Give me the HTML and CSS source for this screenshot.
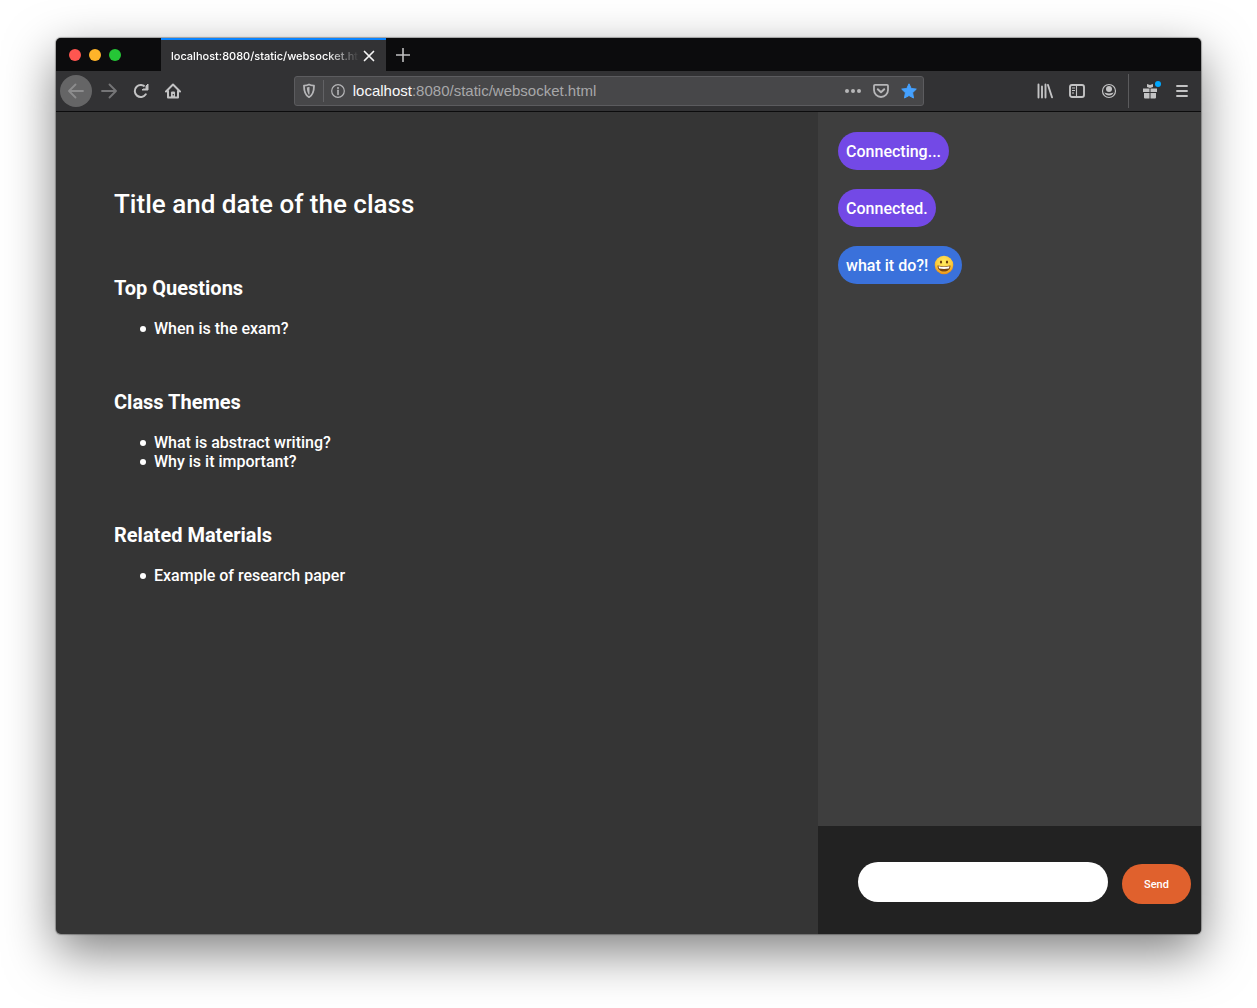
FILE: index.html
```html
<!DOCTYPE html>
<html lang="en">
<head>
<meta charset="utf-8">
<title>Class chat</title>
<link rel="stylesheet" href="styles.css">
</head>
<body>
<div class="window">
  <header class="tabbar">
    <div class="lights">
      <button class="light light-red" aria-label="Close window"></button>
      <button class="light light-yellow" aria-label="Minimize window"></button>
      <button class="light light-green" aria-label="Zoom window"></button>
    </div>
    <div class="tab">
      <span class="tab-title">localhost:8080/static/websocket.html</span>
      <button class="tab-button" aria-label="Close tab"><svg width="12" height="12" viewBox="0 0 12 12"><path d="M1.500 1.500l9 9M10.500 1.500l-9 9" fill="none" stroke="#f4f4f4" stroke-width="1.700" stroke-linecap="round"/></svg></button>
    </div>
    <button class="tab-new" aria-label="New tab"><svg width="14" height="14" viewBox="0 0 14 14"><path d="M7 .5v13M.5 7h13" fill="none" stroke="#c0c0c1" stroke-width="1.600" stroke-linecap="round"/></svg></button>
  </header>

  <nav class="toolbar">
    <button class="tool tool-back" aria-label="Back"><svg width="16" height="16" viewBox="0 0 16 16"><path d="M15 8H1.500M7.500 1.500L1 8l6.500 6.500" fill="none" stroke="#8c8c8d" stroke-width="1.800" stroke-linecap="round" stroke-linejoin="round"/></svg></button>
    <button class="tool" aria-label="Forward"><svg width="16" height="16" viewBox="0 0 16 16"><path d="M1 8h13.500M8.500 1.500L15 8l-6.500 6.500" fill="none" stroke="#757577" stroke-width="1.800" stroke-linecap="round" stroke-linejoin="round"/></svg></button>
    <button class="tool" aria-label="Reload"><svg width="16" height="16" viewBox="0 0 16 16"><path d="M12.800 11.300A6 6 0 1 1 12.500 4.300" fill="none" stroke="#c3c3c4" stroke-width="2" stroke-linecap="round"/><path d="M15 1v6H9z" fill="#c3c3c4" stroke="#c3c3c4" stroke-width="1" stroke-linejoin="round"/><path d="M9.500 5.500l3-3v3z" fill="#323234"/></svg></button>
    <button class="tool" aria-label="Home"><svg width="16" height="16" viewBox="0 0 16 16"><path d="M1 8.500L8 1.500l7 7M3 7.500V14.500h10V7.500" fill="none" stroke="#c3c3c4" stroke-width="2" stroke-linecap="round" stroke-linejoin="round"/><path d="M6 14.500V9.500q0-1 1-1h2q1 0 1 1v5z" fill="#c3c3c4"/><circle cx="8.300" cy="11.700" r=".8" fill="#323234"/></svg></button>
    <div class="spacer"></div>
    <div class="urlbar">
      <button class="url-icon" aria-label="Tracking protection"><svg width="14" height="16" viewBox="0 0 14 16"><path d="M7 1.500c1.800.8 3.500 1 5 1.200 0 5.500-.8 9.200-5 11.500C2.800 11.900 2 8.200 2 2.700c1.500-.2 3.200-.4 5-1.200z" fill="none" stroke="#b6b6b8" stroke-width="1.800" stroke-linejoin="round"/><path d="M7 4v7.500C5.500 10 5 8 4.800 4.600z" fill="#b6b6b8"/><path d="M7 4v7.500" stroke="#b6b6b8" stroke-width="1"/></svg></button>
      <span class="url-divider"></span>
      <button class="url-icon" aria-label="Site information"><svg width="14" height="14" viewBox="0 0 14 14"><circle cx="7" cy="7" r="6.300" fill="none" stroke="#b6b6b8" stroke-width="1.200"/><circle cx="7" cy="4" r="1" fill="#b6b6b8"/><path d="M7 6.300v4.200" stroke="#b6b6b8" stroke-width="1.600" stroke-linecap="round"/></svg></button>
      <span class="url"><b>localhost</b>:8080/static/websocket.html</span>
      <button class="url-icon" aria-label="Page actions"><svg width="16" height="16" viewBox="0 0 16 16"><g fill="#b6b6b8"><circle cx="2" cy="8" r="2"/><circle cx="8" cy="8" r="2"/><circle cx="14" cy="8" r="2"/></g></svg></button>
      <button class="url-icon" aria-label="Save to Pocket"><svg width="16" height="16" viewBox="0 0 16 16"><path d="M2 1.800h12q1 0 1 1V7A7 7 0 0 1 1 7V2.800q0-1 1-1z" fill="none" stroke="#b6b6b8" stroke-width="1.800"/><path d="M4.800 6.300L8 9.300l3.200-3" fill="none" stroke="#b6b6b8" stroke-width="2" stroke-linecap="round" stroke-linejoin="round"/></svg></button>
      <button class="url-icon" aria-label="Edit bookmark"><svg width="16" height="16" viewBox="0 0 16 16"><path d="M8 .8l2.200 4.700 5.100.6-3.700 3.600.9 5.300L8 12.500 3.500 15l.9-5.300L.7 6.100l5.100-.6z" fill="#45a1ff" stroke="#45a1ff" stroke-width="1" stroke-linejoin="round"/></svg></button>
    </div>
    <div class="spacer"></div>
    <button class="tool" aria-label="Library"><svg width="16" height="16" viewBox="0 0 16 16"><path d="M1.500 1.500v13M5 3.500v11M8.500 1.500v13M11 2l4 12.300" fill="none" stroke="#c3c3c4" stroke-width="1.900" stroke-linecap="round"/></svg></button>
    <button class="tool" aria-label="Sidebars"><svg width="16" height="16" viewBox="0 0 16 16"><rect x="1" y="2" width="14" height="12" rx="2" fill="none" stroke="#c3c3c4" stroke-width="1.900"/><path d="M7.500 2v12M3 5h3M3 7.500h3M3 10h2" stroke="#c3c3c4" stroke-width="1.100"/></svg></button>
    <button class="tool" aria-label="Account"><svg width="16" height="16" viewBox="0 0 16 16"><circle cx="8" cy="8" r="6.500" fill="none" stroke="#c3c3c4" stroke-width="1.200"/><circle cx="8" cy="6" r="3" fill="#c3c3c4"/><path d="M3.300 9.500c1 .2 2 1 4.700 1s3.700-.8 4.700-1A5.200 5.200 0 0 1 3.300 9.500z" fill="#c3c3c4"/></svg></button>
    <span class="tool-divider"></span>
    <button class="tool" aria-label="What's new"><svg class="gift" width="20" height="20" viewBox="0 0 20 20"><path d="M3 7.500h6.500V11H3zM10.500 7.500H17V11h-6.500zM4 12h5.500v5.500H5q-1 0-1-1zM10.500 12H16v4.500q0 1-1 1h-4.500z" fill="#c3c3c4"/><path d="M7 3l3 1 3-1v3l-3 1-3-1z" fill="#c3c3c4"/><circle cx="18" cy="3" r="3" fill="#00a8ff"/></svg></button>
    <button class="tool" aria-label="Menu"><svg width="16" height="16" viewBox="0 0 16 16"><path d="M3 3h10M3 8h10M3 13h10" stroke="#c3c3c4" stroke-width="1.900" stroke-linecap="round"/></svg></button>
  </nav>

  <div class="page">
    <main class="notes">
      <h1>Title and date of the class</h1>
      <section>
        <h2>Top Questions</h2>
        <ul><li>When is the exam?</li></ul>
      </section>
      <section>
        <h2>Class Themes</h2>
        <ul><li>What is abstract writing?</li><li>Why is it important?</li></ul>
      </section>
      <section>
        <h2>Related Materials</h2>
        <ul><li>Example of research paper</li></ul>
      </section>
    </main>
    <aside class="chat">
      <div class="messages">
        <p class="bubble">Connecting...</p>
        <p class="bubble">Connected.</p>
        <p class="bubble bubble-user">what it do?!
          <svg class="emoji" role="img" aria-label="grinning face" viewBox="0 0 20 20"><defs><radialGradient id="face" cx=".5" cy=".35" r=".65"><stop offset="0" stop-color="#ffed62"/><stop offset=".65" stop-color="#fccb3b"/><stop offset="1" stop-color="#e98a14"/></radialGradient></defs><circle cx="10" cy="10" r="9.300" fill="url(#face)"/><ellipse cx="7" cy="7" rx="1.100" ry="1.600" fill="#6b3b0b"/><ellipse cx="13" cy="7" rx="1.100" ry="1.600" fill="#6b3b0b"/><path d="M3.500 10.500q6.500 1.500 13 0c0 4-3 6-6.500 6s-6.500-2-6.500-6z" fill="#7a4510"/><path d="M4.500 11.300q5.500 1.100 11 0-.2 1.600-.8 2.300-4.700.9-9.400 0-.6-.7-.8-2.300z" fill="#fff"/></svg></p>
      </div>
      <form class="composer">
        <input class="message-input" type="text" aria-label="Message">
        <button class="send" type="button">Send</button>
      </form>
    </aside>
  </div>
</div>
</body>
</html>
```
FILE: styles.css
```css
* { box-sizing: border-box; }

body {
  margin: 0;
  padding: 38px 56px 74px;
  background: #fff;
  color: #fff;
  font-family: Roboto, sans-serif;
}

button {
  margin: 0;
  padding: 0;
  border: 0;
  background: none;
  color: inherit;
}

svg { display: block; }

.window {
  display: flex;
  flex-direction: column;
  min-height: calc(100vh - 112px);
  overflow: hidden;
  border-radius: 5px;
  background: #353535;
  box-shadow: 0 0 1px 1px rgba(0, 0, 0, .3), 0 18px 50px rgba(0, 0, 0, .5);
}

/* Browser chrome */
.tabbar {
  display: flex;
  height: 33px;
  background: #0c0c0d;
  font-family: Inter, sans-serif;
}

.lights {
  display: flex;
  align-items: center;
  gap: 8px;
  width: 105px;
  padding-left: 13px;
}

.light {
  width: 12px;
  height: 12px;
  border-radius: 50%;
}

.light-red { background: #ff5650; }
.light-yellow { background: #ffb429; }
.light-green { background: #25c636; }

.tab {
  display: flex;
  align-items: center;
  width: 225px;
  padding: 0 7px 0 10px;
  border-top: 2px solid #0a84ff;
  background: #323234;
}

.tab-title {
  flex: 1;
  overflow: hidden;
  font-size: 11px;
  font-weight: 500;
  line-height: 16px;
  white-space: nowrap;
  mask-image: linear-gradient(to left, transparent, #000 32px);
}

.tab-button {
  display: grid;
  place-items: center;
  width: 20px;
  height: 20px;
}

.tab-new {
  display: grid;
  place-items: center;
  width: 34px;
}

.toolbar {
  display: flex;
  align-items: center;
  height: 41px;
  padding: 0 3px 0 4px;
  border-bottom: 1px solid #0c0c0d;
  background: #323234;
}

.tool {
  display: grid;
  place-items: center;
  flex: none;
  width: 32px;
  height: 32px;
}

.tool-back {
  margin-right: 1px;
  border-radius: 50%;
  background: #656566;
}

.tool-divider {
  width: 1px;
  height: 34px;
  margin: 0 5px 0 3px;
  background: #5b5b5d;
}

.gift { overflow: visible; }

.spacer { flex: 1; }

.urlbar {
  display: flex;
  align-items: center;
  flex: 6;
  min-width: 0;
  height: 30px;
  border: 1px solid #5c5c5f;
  border-radius: 3px;
  background: #474749;
}

.url-icon {
  display: grid;
  place-items: center;
  flex: none;
  width: 28px;
  height: 28px;
}

.url-divider {
  width: 1px;
  height: 22px;
  background: #626265;
}

.url {
  flex: 1;
  overflow: hidden;
  padding-left: 1px;
  color: #a7a7a9;
  font-family: "Liberation Sans", sans-serif;
  font-size: 15px;
  line-height: 20px;
  white-space: nowrap;
}

.url b {
  color: #f9f9fa;
  font-weight: 500;
}

/* Class page */
.page {
  display: grid;
  grid-template-columns: 199fr 100fr;
  flex: 1;
}

.notes { padding: 77px 58px; }

h1, h2, ul, p { margin: 0; }

h1 {
  margin-bottom: 56px;
  font-size: 26px;
  font-weight: 500;
  line-height: 31px;
}

section { margin-bottom: 52px; }

h2 {
  margin-bottom: 19px;
  font-size: 20px;
  font-weight: 700;
  line-height: 24px;
}

ul {
  padding-left: 26px;
  list-style: none;
}

li {
  display: flex;
  align-items: center;
  gap: 8px;
  font-size: 16px;
  font-weight: 500;
  line-height: 19px;
}

li::before {
  content: "";
  width: 6px;
  height: 6px;
  border-radius: 50%;
  background: #fff;
}

.chat {
  display: flex;
  flex-direction: column;
  background: #3e3e3e;
}

.messages {
  display: flex;
  flex: 1;
  flex-direction: column;
  align-items: flex-start;
  gap: 19px;
  padding: 20px;
}

.bubble {
  display: flex;
  align-items: center;
  gap: 6px;
  height: 38px;
  padding: 0 8px;
  border-radius: 19px;
  background: #7349e6;
  font-size: 16px;
  font-weight: 500;
}

.bubble-user { background: #3a71db; }

.emoji {
  width: 20px;
  height: 20px;
}

.composer {
  display: flex;
  align-items: baseline;
  gap: 14px;
  height: 108px;
  padding: 36px 10px 0 40px;
  background: #222;
}

.message-input {
  flex: 1;
  min-width: 0;
  height: 40px;
  padding: 0 16px;
  border: 0;
  border-radius: 20px;
  background: #fff;
  font: 16px Roboto, sans-serif;
}

.send {
  width: 69px;
  height: 40px;
  border-radius: 20px;
  background: #e0612d;
  font: 500 11px Roboto, sans-serif;
}
```
